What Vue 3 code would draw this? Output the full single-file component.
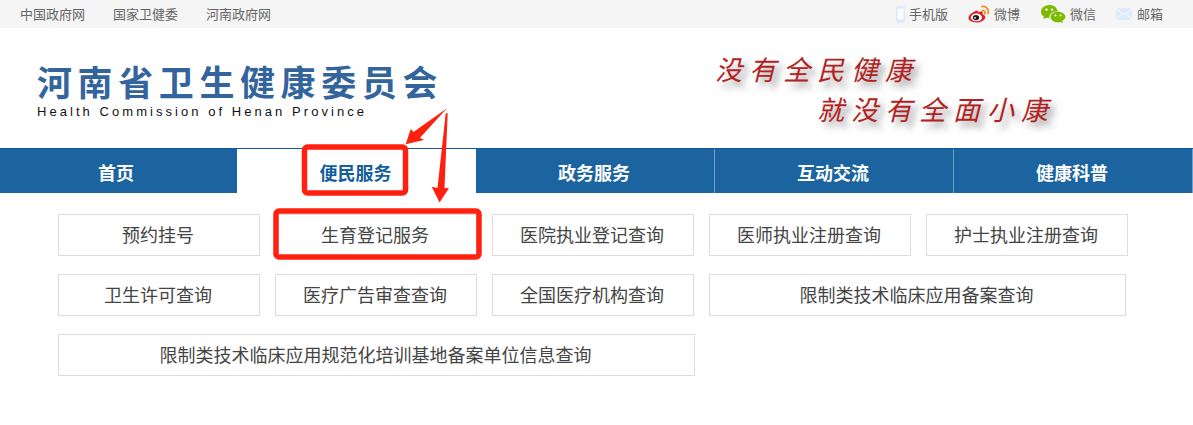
<script setup>
const leftLinks = ['中国政府网', '国家卫健委', '河南政府网']
const navs = ['首页', '便民服务', '政务服务', '互动交流', '健康科普']
const services = [
  { t: '预约挂号', c: '' },
  { t: '生育登记服务', c: '' },
  { t: '医院执业登记查询', c: '' },
  { t: '医师执业注册查询', c: '' },
  { t: '护士执业注册查询', c: '' },
  { t: '卫生许可查询', c: '' },
  { t: '医疗广告审查查询', c: '' },
  { t: '全国医疗机构查询', c: '' },
  { t: '限制类技术临床应用备案查询', c: 'w2' },
  { t: '限制类技术临床应用规范化培训基地备案单位信息查询', c: 'w3' }
]
</script>

<template>
  <div class="page">
    <div class="topbar">
      <div class="left">
        <a v-for="l in leftLinks" :key="l">{{ l }}</a>
      </div>
      <div class="right">
        <span class="ti t1">
          <svg width="9" height="17" viewBox="0 0 9 17"><rect width="9" height="17" rx="2" fill="#dcebfb"/><rect x="1.500" y="2.500" width="6" height="11" fill="#f8fbff"/></svg>
          手机版
        </span>
        <span class="ti t2">
          <svg width="22" height="18" viewBox="0 0 22 18">
            <path d="M9 5.500C5 6.800.5 10 .5 12.800c0 2.800 3.900 4.700 8 4.700 5.200 0 8.700-2.800 8.700-5.300 0-1.700-1.500-2.400-2.600-2.700.5-1.500.2-2.900-1.600-3-1 0-2.400.4-3 .9-.3-.8 0-2.300-1-1.900z" fill="#df1f1f"/>
            <ellipse cx="8.400" cy="12.400" rx="5.600" ry="3.900" fill="#fff"/>
            <ellipse cx="8" cy="12.600" rx="3.200" ry="2.700" fill="#1f1f1f"/>
            <circle cx="7" cy="12.800" r=".9" fill="#fff"/>
            <path d="M14.300 5.600c1.700-.5 3.200 1.200 2.600 3M14 1.500c4-.9 7.300 2.800 6 6.800" fill="none" stroke="#f09020" stroke-width="1.800" stroke-linecap="round"/>
          </svg>
          微博
        </span>
        <span class="ti t3">
          <svg width="25" height="18" viewBox="0 0 25 18">
            <path d="M8.500 0C3.800 0 0 3 0 6.700c0 2.100 1.200 3.900 3 5.100l-.6 2.500 2.900-1.600c.9.300 1.900.4 2.900.5-.2-4.300 3.500-7 8.600-6.800C16 2.400 12.600 0 8.500 0z" fill="#7dbb00"/>
            <path d="M17 6.800c-4.200 0-7.500 2.400-7.500 5.300s3.300 5.300 7.500 5.300c.8 0 1.600-.1 2.400-.3l2.400 1-.6-2.100c1.900-1 3.200-2.500 3.200-3.900 0-2.900-3.200-5.300-7.400-5.300z" fill="#7dbb00"/>
            <circle cx="5.500" cy="4.600" r="1.200" fill="#fff"/><circle cx="11" cy="4.600" r="1.200" fill="#fff"/>
            <circle cx="14.500" cy="10.500" r="1" fill="#fff"/><circle cx="19.500" cy="10.500" r="1" fill="#fff"/>
          </svg>
          微信
        </span>
        <span class="ti t4">
          <svg width="16" height="12" viewBox="0 0 16 12"><rect width="16" height="12" fill="#dcebfb"/><path d="M0 .5l8 6.500L16 .5M0 12l5.500-6.500M16 12l-5.500-6.500" fill="none" stroke="#fff" stroke-width="1"/></svg>
          邮箱
        </span>
      </div>
    </div>

    <header class="head">
      <div class="logo">
        <div class="cn">河南省卫生健康委员会</div>
        <div class="en">Health Commission of Henan Province</div>
      </div>
      <div class="slogan">
        <div class="s1">没有全民健康</div>
        <div class="s2">就没有全面小康</div>
      </div>
    </header>

    <nav class="nav">
      <div v-for="(n, i) in navs" :key="n" class="item" :class="{ active: i === 1, first: i === 0 }">{{ n }}</div>
    </nav>

    <section class="grid">
      <div v-for="s in services" :key="s.t" class="btn" :class="s.c">{{ s.t }}</div>
    </section>

    <svg class="marks" width="1193" height="425" viewBox="0 0 1193 425">
      <rect x="304.500" y="147" width="101" height="46" rx="3" fill="none" stroke="#ff2010" stroke-width="5.500"/>
      <rect x="276" y="211" width="203" height="46" rx="3" fill="none" stroke="#ff2010" stroke-width="5.500"/>
      <path d="M447 108.300L413.500 132 410.700 129 405.700 144.300 424 140 420 137.700z" fill="#ff2010"/>
      <path d="M445.700 113.300L437.500 188 431.700 186.700 439.500 202.500 449 188.300 444.500 188 447.700 113.300z" fill="#ff2010"/>
    </svg>
  </div>
</template>

<style scoped>
.page {
  position: relative;
  width: 1193px;
  height: 425px;
  overflow: hidden;
  background: #fff;
  font-family: "Noto Sans CJK SC", "Liberation Sans", sans-serif;
}
.topbar {
  height: 28px;
  box-sizing: border-box;
  padding-bottom: 2px;
  background: #f5f5f5;
  display: flex;
  justify-content: space-between;
  align-items: center;
  font-size: 13px;
  color: #666;
}
.left {
  display: flex;
  gap: 28px;
  padding-left: 20px;
}
.right {
  display: flex;
  align-items: center;
  padding-right: 30px;
}
.ti {
  display: flex;
  align-items: center;
  gap: 4px;
  margin-left: 20px;
}
.ti svg {
  position: relative;
  top: 1px;
}
.t3 { margin-left: 21px; }
.t4 { gap: 5px; }
.head {
  height: 120px;
  display: flex;
}
.logo {
  padding: 32px 0 0 37px;
  width: 715px;
  box-sizing: border-box;
}
.cn {
  font-size: 35px;
  line-height: 42px;
  font-weight: 700;
  letter-spacing: 5.600px;
  color: #33659c;
  white-space: nowrap;
}
.en {
  font-family: "Liberation Sans", sans-serif;
  font-size: 13px;
  line-height: 16px;
  letter-spacing: 3.050px;
  color: #111;
  white-space: nowrap;
  margin-top: 2px;
}
.slogan {
  padding-top: 21px;
  font-size: 27px;
  line-height: 40px;
  font-style: italic;
  letter-spacing: 7px;
  color: #b22222;
  text-shadow: 5px 6px 6px rgba(90, 90, 90, 0.55);
  white-space: nowrap;
}
.s2 { margin-left: 102px; }
.nav {
  height: 45px;
  background: #1c64a0;
  border-top: 1px solid #12599a;
  box-sizing: border-box;
  display: grid;
  grid-template-columns: 237px 239px 239px 239px 239px;
}
.item {
  color: #fff;
  font-size: 18px;
  font-weight: 700;
  line-height: 47px;
  height: 44px;
  padding-right: 2px;
  text-align: center;
  border-right: 1px solid #6fa0c8;
  box-sizing: border-box;
}
.item.first {
  padding-right: 5px;
  border-right: none;
}
.item.active {
  background: #fff;
  color: #135e9c;
  border-right: none;
}
.grid {
  display: flex;
  flex-wrap: wrap;
  gap: 18px 15px;
  padding: 21px 0 0 58px;
  width: 1100px;
}
.btn {
  width: 202px;
  height: 42px;
  padding-right: 2px;
  box-sizing: border-box;
  border: 1px solid #ddd;
  font-size: 18px;
  line-height: 38px;
  text-align: center;
  color: #444;
  white-space: nowrap;
}
.btn.w2 { width: 417px; }
.btn.w3 { width: 637px; }
.marks {
  position: absolute;
  left: 0;
  top: 0;
  pointer-events: none;
}
</style>
